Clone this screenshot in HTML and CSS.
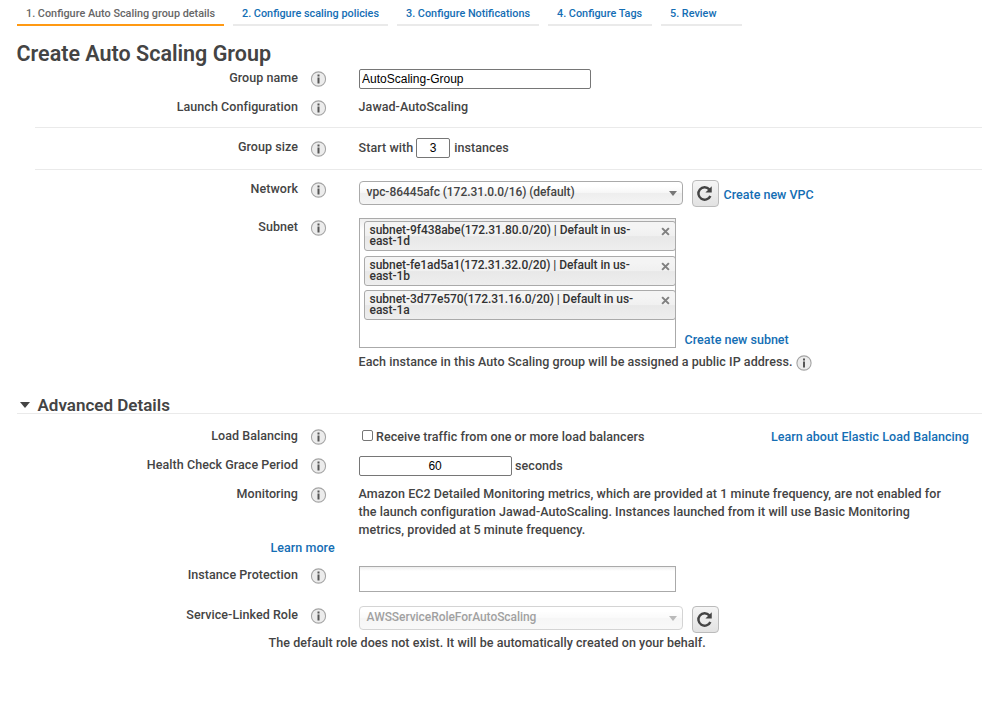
FILE: index.html
```html
<!DOCTYPE html>
<html lang="en">
<head>
<meta charset="utf-8">
<title>Create Auto Scaling Group</title>
<link rel="stylesheet" href="styles.css">
</head>
<body>
<svg class="defs" width="0" height="0" aria-hidden="true">
  <symbol id="info" viewBox="0 0 16 16">
    <circle cx="8" cy="8" r="7.1" fill="#ececec" stroke="#a4a4a4" stroke-width="1.1"/>
    <path d="M7 3.5h2v2H7zM7 6.4h2V12.5H7z" fill="#555"/>
  </symbol>
  <symbol id="refresh" viewBox="0 0 18 18">
    <path d="M14.1 4.6A6.6 6.6 0 1 0 15.2 11.6" fill="none" stroke="#444" stroke-width="2.6"/>
    <path d="M16.7 1.2V7.9H10z" fill="#444"/>
  </symbol>
  <symbol id="close" viewBox="0 0 8 8">
    <path d="M1 1l6 6M7 1L1 7" stroke="#808080" stroke-width="1.8"/>
  </symbol>
</svg>
<nav class="tabs">
  <a class="tab tab1 active">1. Configure Auto Scaling group details</a>
  <a class="tab tab2">2. Configure scaling policies</a>
  <a class="tab tab3">3. Configure Notifications</a>
  <a class="tab tab4">4. Configure Tags</a>
  <a class="tab tab5">5. Review</a>
</nav>
<main>
  <h1>Create Auto Scaling Group</h1>
  <div class="row name-row">
    <label>Group name</label><svg class="info"><use href="#info"/></svg>
    <div class="field"><input class="text name" value="AutoScaling-Group"></div>
  </div>
  <div class="row config-row">
    <label>Launch Configuration</label><svg class="info"><use href="#info"/></svg>
    <div class="field">Jawad-AutoScaling</div>
  </div>
  <div class="row size-row ruled">
    <label>Group size</label><svg class="info"><use href="#info"/></svg>
    <div class="field inline"><span>Start with</span><input class="text count" value="3"><span>instances</span></div>
  </div>
  <div class="row network-row ruled">
    <label>Network</label><svg class="info"><use href="#info"/></svg>
    <div class="field choice"><div class="select"><span>vpc-86445afc (172.31.0.0/16) (default)</span><i class="arrow"></i></div><button class="refresh"><svg><use href="#refresh"/></svg></button><a class="beside">Create new VPC</a></div>
  </div>
  <div class="row subnet-row">
    <label>Subnet</label><svg class="info"><use href="#info"/></svg>
    <div class="field subnets">
      <div class="multi">
        <div class="chip"><span>subnet-9f438abe(172.31.80.0/20) | Default in us-<br>east-1d</span><svg><use href="#close"/></svg></div>
        <div class="chip"><span>subnet-fe1ad5a1(172.31.32.0/20) | Default in us-<br>east-1b</span><svg><use href="#close"/></svg></div>
        <div class="chip"><span>subnet-3d77e570(172.31.16.0/20) | Default in us-<br>east-1a</span><svg><use href="#close"/></svg></div>
      </div>
      <a>Create new subnet</a>
    </div>
  </div>
  <div class="note"><span>Each instance in this Auto Scaling group will be assigned a public IP address.</span><svg class="info"><use href="#info"/></svg></div>
  <h2><i class="arrow"></i>Advanced Details</h2>
  <div class="row lb-row">
    <label>Load Balancing</label><svg class="info"><use href="#info"/></svg>
    <div class="field check"><i class="box"></i><span>Receive traffic from one or more load balancers</span><a>Learn about Elastic Load Balancing</a></div>
  </div>
  <div class="row health-row">
    <label>Health Check Grace Period</label><svg class="info"><use href="#info"/></svg>
    <div class="field inline"><input class="text grace" value="60"><span>seconds</span></div>
  </div>
  <div class="row monitor-row">
    <label>Monitoring</label><svg class="info"><use href="#info"/></svg>
    <div class="field">Amazon EC2 Detailed Monitoring metrics, which are provided at 1 minute frequency, are not enabled for<br>the launch configuration Jawad-AutoScaling. Instances launched from it will use Basic Monitoring<br>metrics, provided at 5 minute frequency.</div>
  </div>
  <div class="more"><a>Learn more</a></div>
  <div class="row protect-row">
    <label>Instance Protection</label><svg class="info"><use href="#info"/></svg>
    <div class="field"><div class="multi empty"></div></div>
  </div>
  <div class="row role-row">
    <label>Service-Linked Role</label><svg class="info"><use href="#info"/></svg>
    <div class="field choice"><div class="select disabled"><span>AWSServiceRoleForAutoScaling</span><i class="arrow"></i></div><button class="refresh"><svg><use href="#refresh"/></svg></button></div>
  </div>
  <div class="role-note">The default role does not exist. It will be automatically created on your behalf.</div>
</main>
</body>
</html>
```
FILE: styles.css
```css
* { box-sizing: border-box; }
body {
  margin: 0;
  height: 728px;
  overflow: hidden;
  background: #fff;
  color: #444;
  font: 550 12.5px/18px Roboto, "Liberation Sans", sans-serif;
  letter-spacing: .055px;
  white-space: nowrap;
}
.defs { display: block; }
a { color: #146eb4; }
.tabs { display: flex; gap: 9px; height: 26px; padding-left: 17px; letter-spacing: 0; }
.tab { height: 26px; padding: 5px 0 0 9px; border-bottom: 2px solid #eaeaea; font-size: 10.85px; }
.tab.active { color: #666; border-color: #ff9913; }
.tab1 { width: 207px; }
.tab2 { width: 155px; }
.tab3 { width: 142px; }
.tab4 { width: 104px; }
.tab5 { width: 81px; }
main { display: flex; flex-direction: column; }
h1 { height: 43px; margin: 0; padding: 14px 0 0 16.5px; font-size: 21.5px; line-height: 28px; font-weight: 600; letter-spacing: 0; }
.row { display: grid; grid-template-columns: 263px 36px 1fr; align-items: start; margin-left: 35px; flex: none; }
.row label { text-align: right; }
.row .info { margin: 1.5px 0 0 12.5px; }
.info { display: block; width: 16px; height: 16px; }
.row .info { transform: translateX(-.5px); }
.field { padding-left: 24.6px; }
.ruled { border-top: 1px solid #eaeaea; }
.inline { display: flex; }
.text { display: block; height: 20px; padding: 0 2.5px; border: 1px solid #767676; border-radius: 2px; background: #fff; color: #000; font: 12px "Liberation Sans", sans-serif; }
.name { width: 232px; }
.count { width: 34px; margin: 0 4px 0 3px; text-align: center; }
.grace { width: 153px; margin-right: 3.5px; text-align: center; }
.name-row { height: 29px; }
.config-row { height: 29px; }
.size-row { height: 42px; padding-top: 10px; }
.size-row .info { margin-top: 2.5px; }
.size-row span { padding-top: 1px; }
.network-row { height: 49px; padding-top: 11px; }
.subnet-row { height: 131px; }
.network-row label { margin-top: -1px; }
.network-row .info { margin-top: .5px; }
.choice { display: flex; }
.select { display: flex; justify-content: space-between; width: 324px; height: 24px; padding: 1px 5px 0 7px; border: 1px solid #aaa; border-radius: 4px; background: linear-gradient(#fff 20%, #f6f6f6 50%, #eee 52%, #f4f4f4); font-size: 12px; line-height: 19px; font-weight: 500; letter-spacing: -.06px; }
.disabled { opacity: .5; }
.arrow { width: 0; height: 0; border: 4px solid transparent; border-top: 5px solid #777; border-bottom: 0; margin-top: 8px; }
.refresh { width: 27px; height: 27px; margin: -1px 0 0 9px; padding: 4px 3px; border: 1px solid #bbb; border-radius: 4px; background: linear-gradient(#f5f5f5, #e2e2e2); flex: none; }
.role-row .refresh { margin-top: 0; }
.refresh svg { display: block; width: 17px; height: 17px; }
.beside { margin: 5px 0 0 5px; letter-spacing: 0; }
.subnets { display: flex; align-items: flex-end; gap: 9px; }
.subnets a { margin-bottom: -1px; letter-spacing: 0; }
.multi { width: 317px; height: 130px; padding: 2px 0 0 4px; border: 1px solid #aaa; background: linear-gradient(#eee 0, #fff 12px); }
.chip { display: flex; justify-content: space-between; width: 312px; height: 30px; margin-bottom: 4.7px; padding: 3px 5px 0 5px; border: 1px solid #aaa; border-radius: 3px; background: linear-gradient(#f4f4f4 20%, #f0f0f0 50%, #e8e8e8 52%, #eee); color: #333; font-size: 12px; line-height: 11px; font-weight: 500; letter-spacing: -.06px; }
.chip svg { width: 9px; height: 9px; margin-top: 2px; }
.note { display: flex; gap: 4px; height: 47px; padding: 4px 0 0 358.6px; }
.note .info { margin-top: 1.5px; }
h2 { display: flex; height: 18px; margin: 0 0 0 17px; border-bottom: 1px solid #eaeaea; font-size: 17px; line-height: 19px; font-weight: 600; letter-spacing: 0; }
h2 .arrow { margin: 6px 7.5px 0 3px; border-width: 6px 5.5px 0; border-top-color: #444; }
.lb-row { height: 42px; padding-top: 13px; }
.check { display: flex; padding-top: 1px; }
.box { width: 11px; height: 11px; margin: 2px 3px 0 3.4px; border: 1px solid #767676; border-radius: 2px; }
.check a { margin: 0 13px 0 auto; }
.health-row { height: 29px; }
.health-row span { padding-top: 1px; }
.monitor-row { height: 54px; }
.more { padding-left: 270.5px; height: 27px; }
.protect-row { height: 40px; }
.empty { height: 26px; background: linear-gradient(#eee 0, #fff 4px); }
.role-row { height: 28px; }
.role-note { padding-left: 268.6px; }
```
